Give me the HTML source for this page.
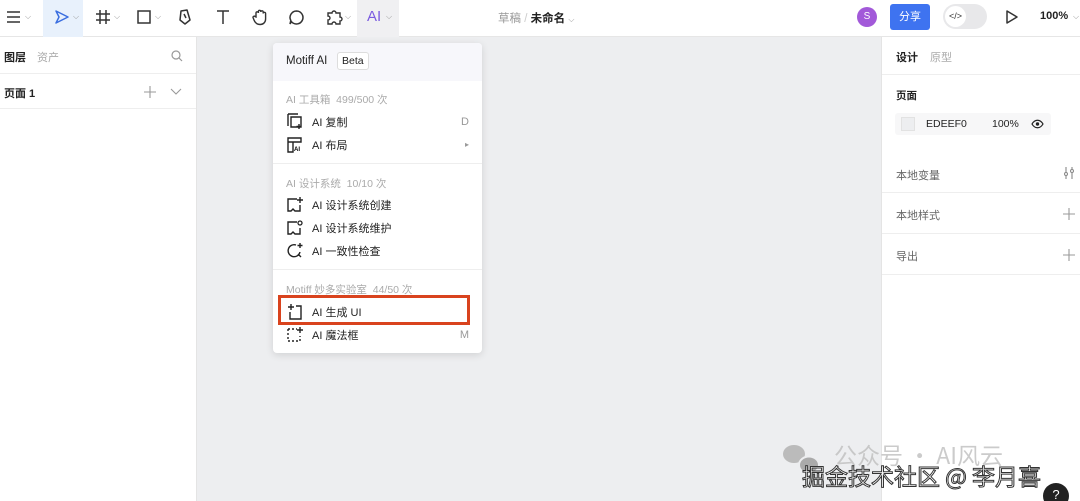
<!DOCTYPE html>
<html style="overflow:hidden;width:1080px;height:501px"><head><meta charset="utf-8"><style>
*{margin:0;padding:0;box-sizing:border-box}
body{width:1080px;height:501px;overflow:hidden;background:#edeef0;font-family:"Liberation Sans","Noto Sans CJK SC",sans-serif;font-size:12px;color:#222;position:relative}
.abs{position:absolute}
.top{left:0;top:0;width:1080px;height:37px;background:#fff;border-bottom:1px solid #e6e6e6}
.left{left:0;top:37px;width:197px;height:464px;background:#fff;border-right:1px solid #e4e4e4}
.right{left:881px;top:37px;width:199px;height:464px;background:#fff;border-left:1px solid #e4e4e4}
.chev{font-size:8px;color:#999}
.menu{left:273px;top:43px;width:209px;height:310px;background:#fff;border-radius:4px;box-shadow:0 2px 8px rgba(0,0,0,.12)}
.mi{position:absolute;left:0;width:209px;height:23px;font-size:11px;display:flex;align-items:center}
.mi .t{position:absolute;left:39px}
.mi .k{position:absolute;right:13px;color:#999}
.sec{position:absolute;left:13px;color:#aaa;font-size:10.5px}
.hr{position:absolute;left:0;width:209px;height:1px;background:#eee}
.ic{position:absolute;left:14px;top:3px}
.rl{position:absolute;left:14px;font-size:11px;color:#666}
.rline{position:absolute;left:0;width:199px;height:1px;background:#eee}
</style></head><body>
<div class="abs top"></div>
<svg class="abs" style="left:6px;top:10px" width="16" height="14"><path d="M1 2h13M1 7h13M1 12h13" stroke="#333" stroke-width="1.4"/></svg>
<span class="abs chev" style="left:25px;top:12px">⌵</span>
<div class="abs" style="left:43px;top:0;width:40px;height:37px;background:#e8f1fc"></div>
<svg class="abs" style="left:54px;top:9px" width="16" height="16"><path d="M2 2l12 6-12 6 3-6z" fill="none" stroke="#3b6fe0" stroke-width="1.5" stroke-linejoin="round"/></svg>
<span class="abs chev" style="left:73px;top:12px">⌵</span>
<svg class="abs" style="left:95px;top:9px" width="16" height="16"><path d="M5 1v14M11 1v14M1 5h14M1 11h14" stroke="#333" stroke-width="1.5"/></svg>
<span class="abs chev" style="left:114px;top:12px">⌵</span>
<svg class="abs" style="left:136px;top:9px" width="16" height="16"><rect x="2" y="2" width="12" height="12" fill="none" stroke="#333" stroke-width="1.5"/></svg>
<span class="abs chev" style="left:155px;top:12px">⌵</span>
<svg class="abs" style="left:177px;top:8px" width="16" height="18"><path d="M4 3l6-1 3 10-5 4-5-4z M7 6l2 4" fill="none" stroke="#333" stroke-width="1.5" stroke-linejoin="round"/></svg>
<svg class="abs" style="left:215px;top:9px" width="16" height="16"><path d="M2 2h12M8 2v13" stroke="#333" stroke-width="1.5"/></svg>
<svg class="abs" style="left:251px;top:8px" width="18" height="18"><path d="M5 9V5a1.2 1.2 0 012.4 0V3.5a1.2 1.2 0 012.4 0V4a1.2 1.2 0 012.4 0v1.5a1.2 1.2 0 012.4 0V11c0 3.5-2.5 5.5-5.5 5.5S4 14.5 3 12L2 9.5a1.2 1.2 0 012.2-.8z" fill="none" stroke="#333" stroke-width="1.4"/></svg>
<svg class="abs" style="left:288px;top:9px" width="17" height="17"><path d="M8.5 2a6.5 6.5 0 11-5 10.7L2 15l.8-3.5A6.5 6.5 0 018.5 2z" fill="none" stroke="#333" stroke-width="1.5"/></svg>
<svg class="abs" style="left:325px;top:8px" width="18" height="18"><path d="M3 5h4a2 2 0 014 0h4v4a2 2 0 010 4v3h-4a2 2 0 00-4 0H3v-4a2 2 0 000-4z" fill="none" stroke="#333" stroke-width="1.4"/></svg>
<span class="abs chev" style="left:345px;top:12px">⌵</span>
<div class="abs" style="left:357px;top:0;width:42px;height:37px;background:#f0f0f2"></div>
<span class="abs" style="left:367px;top:8px;font-size:15px;color:#7b5ce0">AI</span>
<span class="abs chev" style="left:386px;top:12px">⌵</span>
<span class="abs" style="left:498px;top:10px;font-size:11.5px;color:#999">草稿 <span style="color:#ccc">/</span> <span style="color:#222;font-weight:bold">未命名</span> <span class="chev">⌵</span></span>
<div class="abs" style="left:857px;top:7px;width:20px;height:20px;border-radius:50%;background:#a259d9;color:#fff;font-size:10px;text-align:center;line-height:20px">S</div>
<div class="abs" style="left:890px;top:4px;width:40px;height:26px;border-radius:3px;background:#3e73f0;color:#fff;font-size:11px;text-align:center;line-height:26px">分享</div>
<div class="abs" style="left:943px;top:4px;width:44px;height:25px;border-radius:13px;background:#e8e8ea"></div>
<div class="abs" style="left:945px;top:6px;width:21px;height:21px;border-radius:50%;background:#fff;font-size:9px;text-align:center;line-height:21px;color:#333">&lt;/&gt;</div>
<svg class="abs" style="left:1005px;top:9px" width="14" height="16"><path d="M2 2l10 6-10 6z" fill="none" stroke="#333" stroke-width="1.5" stroke-linejoin="round"/></svg>
<span class="abs" style="left:1040px;top:10px;font-size:11px;font-weight:bold">100%</span>
<span class="abs chev" style="left:1073px;top:12px">⌵</span>

<div class="abs left">
<span class="abs" style="left:4px;top:12px;font-weight:bold;font-size:11px">图层</span>
<span class="abs" style="left:37px;top:12px;color:#aaa;font-size:11px">资产</span>
<svg class="abs" style="left:171px;top:13px" width="12" height="12"><circle cx="5" cy="5" r="4" fill="none" stroke="#999" stroke-width="1.2"/><path d="M8 8l3 3" stroke="#999" stroke-width="1.2"/></svg>
<div class="abs" style="left:0;top:36px;width:196px;height:1px;background:#eee"></div>
<span class="abs" style="left:4px;top:48px;font-weight:bold;font-size:11px">页面 1</span>
<svg class="abs" style="left:144px;top:49px" width="12" height="12"><path d="M6 0v12M0 6h12" stroke="#999" stroke-width="1.1"/></svg>
<svg class="abs" style="left:170px;top:51px" width="12" height="8"><path d="M1 1l5 5 5-5" fill="none" stroke="#999" stroke-width="1.1"/></svg>
<div class="abs" style="left:0;top:71px;width:196px;height:1px;background:#eee"></div>
</div>

<div class="abs right">
<span class="abs" style="left:14px;top:12px;font-weight:bold;font-size:11px">设计</span>
<span class="abs" style="left:48px;top:12px;color:#aaa;font-size:11px">原型</span>
<div class="rline" style="top:37px"></div>
<span class="abs" style="left:14px;top:51px;font-weight:bold;font-size:10.5px">页面</span>
<div class="abs" style="left:13px;top:76px;width:156px;height:22px;background:#f7f7f8;border-radius:3px"></div>
<div class="abs" style="left:19px;top:80px;width:14px;height:14px;background:#edeef0;border:1px solid #e2e2e2"></div>
<span class="abs" style="left:44px;top:81px;font-size:10.5px">EDEEF0</span>
<span class="abs" style="left:110px;top:81px;font-size:10.5px">100%</span>
<svg class="abs" style="left:149px;top:82px" width="13" height="10"><path d="M1 5c3-5 8-5 11 0-3 5-8 5-11 0z" fill="none" stroke="#222" stroke-width="1.2"/><circle cx="6.5" cy="5" r="1.7" fill="#222"/></svg>
<span class="rl" style="top:130px">本地变量</span>
<svg class="abs" style="left:181px;top:129px" width="12" height="14"><path d="M3 1v12M9 1v12" stroke="#888" stroke-width="1.1"/><circle cx="3" cy="8" r="1.5" fill="#fff" stroke="#888"/><circle cx="9" cy="5" r="1.5" fill="#fff" stroke="#888"/></svg>
<div class="rline" style="top:155px"></div>
<span class="rl" style="top:170px">本地样式</span>
<svg class="abs" style="left:181px;top:171px" width="12" height="12"><path d="M6 0v12M0 6h12" stroke="#999" stroke-width="1.1"/></svg>
<div class="rline" style="top:196px"></div>
<span class="rl" style="top:211px">导出</span>
<svg class="abs" style="left:181px;top:212px" width="12" height="12"><path d="M6 0v12M0 6h12" stroke="#999" stroke-width="1.1"/></svg>
<div class="rline" style="top:237px"></div>
</div>

<div class="abs menu">
<div class="abs" style="left:0;top:0;width:209px;height:38px;background:#f7f7fb;border-radius:4px 4px 0 0"></div>
<span class="abs" style="left:13px;top:12px;font-size:11.5px">Motiff AI</span>
<span class="abs" style="left:64px;top:9px;font-size:10.5px;border:1px solid #ddd;border-radius:3px;padding:2px 4px;background:#fff">Beta</span>
<span class="sec" style="top:49px">AI 工具箱&nbsp;&nbsp;499/500 次</span>
<div class="mi" style="top:67px"><svg class="ic" width="16" height="17"><path d="M1 1h10M1 1v12M4 4h10v10H4z" fill="none" stroke="#222" stroke-width="1.4"/><path d="M12 11v5M9.5 13.5h5" stroke="#222" stroke-width="1.4"/></svg><span class="t">AI 复制</span><span class="k">D</span></div>
<div class="mi" style="top:90px"><svg class="ic" width="16" height="17"><path d="M1 2h13v4H1zM1 6v10h5V6" fill="none" stroke="#222" stroke-width="1.4"/><text x="7" y="15" font-size="6" font-family="Liberation Sans" font-weight="bold">AI</text></svg><span class="t">AI 布局</span><span class="k" style="font-size:8px">▸</span></div>
<div class="hr" style="top:120px"></div>
<span class="sec" style="top:133px">AI 设计系统&nbsp;&nbsp;10/10 次</span>
<div class="mi" style="top:150px"><svg class="ic" width="16" height="17"><path d="M10 3H1v12h3l2-2 2 2h5V9" fill="none" stroke="#222" stroke-width="1.4"/><path d="M13 1v6M10 4h6" stroke="#222" stroke-width="1.4"/></svg><span class="t">AI 设计系统创建</span></div>
<div class="mi" style="top:173px"><svg class="ic" width="16" height="17"><path d="M10 3H1v12h3l2-2 2 2h5V9" fill="none" stroke="#222" stroke-width="1.4"/><circle cx="13" cy="4" r="2" fill="none" stroke="#222" stroke-width="1.3"/></svg><span class="t">AI 设计系统维护</span></div>
<div class="mi" style="top:196px"><svg class="ic" width="16" height="17"><path d="M9 3a6 6 0 104 7M11 12l3 3" fill="none" stroke="#222" stroke-width="1.4"/><path d="M13 1v5M10.5 3.5h5" stroke="#222" stroke-width="1.4"/></svg><span class="t">AI 一致性检查</span></div>
<div class="hr" style="top:226px"></div>
<span class="sec" style="top:239px">Motiff 妙多实验室&nbsp;&nbsp;44/50 次</span>
<div class="mi" style="top:257px"><svg class="ic" width="16" height="17"><path d="M9 3h5v13H3V9" fill="none" stroke="#222" stroke-width="1.4"/><path d="M4 1v6M1 4h6" stroke="#222" stroke-width="1.4"/></svg><span class="t">AI 生成 UI</span></div>
<div class="mi" style="top:280px"><svg class="ic" width="16" height="17"><path d="M1 3h9M1 3v12h12V10" fill="none" stroke="#222" stroke-width="1.4" stroke-dasharray="2 2"/><path d="M13 1v6M10 4h6" stroke="#222" stroke-width="1.4"/></svg><span class="t">AI 魔法框</span><span class="k">M</span></div>
</div>
<div class="abs" style="left:278px;top:295px;width:192px;height:30px;border:3px solid #d9431e"></div>

<svg class="abs" style="left:782px;top:442px" width="44" height="36"><ellipse cx="12" cy="12" rx="11" ry="9" fill="#bbb"/><ellipse cx="27" cy="23" rx="10" ry="8.5" fill="#aaa" stroke="#edeef0" stroke-width="2"/></svg>
<span class="abs" style="left:834px;top:439px;font-size:23px;line-height:30px;color:rgba(190,190,190,.8);font-family:'Noto Sans CJK SC',sans-serif;white-space:nowrap">公众号 · AI风云</span>
<span class="abs" style="left:802px;top:460px;font-size:23px;line-height:30px;color:#fff;-webkit-text-stroke:1px #333;font-family:'Noto Sans CJK SC',sans-serif;white-space:nowrap">掘金技术社区 @ 李月喜</span>
<div class="abs" style="left:1043px;top:483px;width:26px;height:26px;border-radius:50%;background:#222;color:#fff;text-align:center;line-height:24px;font-size:13px">?</div>
</body></html>
